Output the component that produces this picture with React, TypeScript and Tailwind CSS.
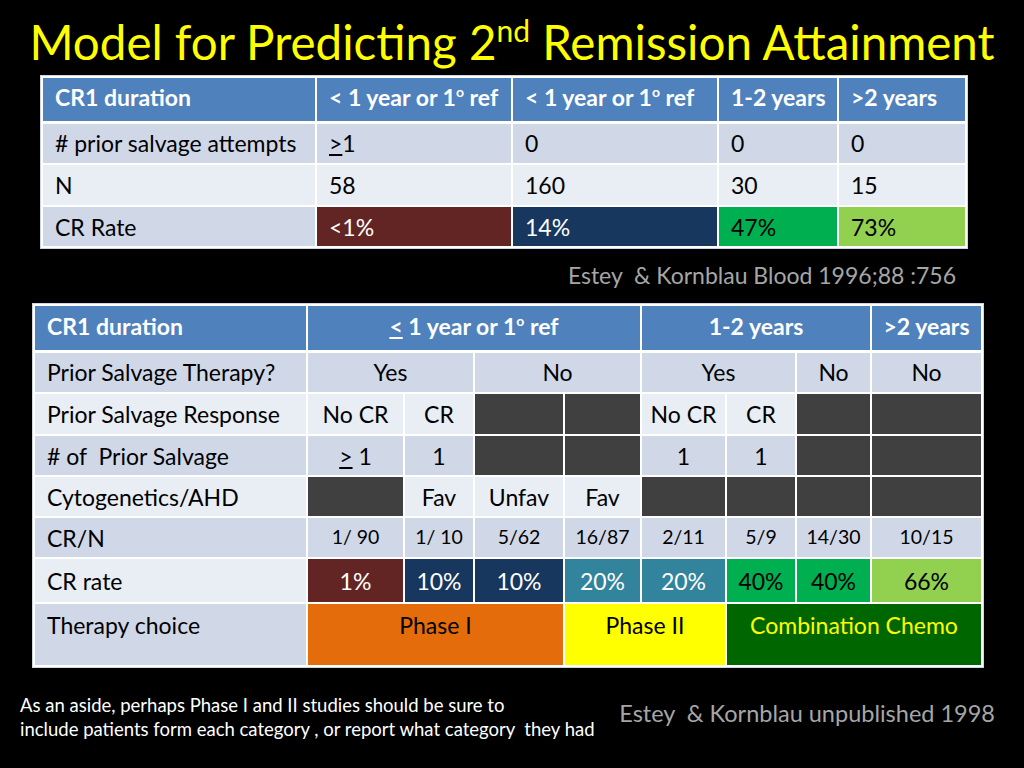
const font = { fontFamily: 'Lato, "Open Sans", sans-serif' }

const hd = 'bg-[#4f81bd] text-white font-bold border-2 border-white border-b-[3px]'
const odd = 'bg-[#d0d8e8]'
const even = 'bg-[#e9edf4]'
const dark = 'bg-[#404040]'
const cell = 'border-2 border-white p-0'

const Sup = () => <sup className="text-[14px] relative -top-[9px]">o</sup>

const TopTable = () => (
  <table className="table-fixed border-collapse text-[23px] leading-[28px] text-black ml-[41px] outline outline-1 outline-[#cfd6e3]">
    <colgroup>
      <col className="w-[274px]" />
      <col className="w-[196px]" />
      <col className="w-[206px]" />
      <col className="w-[120px]" />
      <col className="w-[128px]" />
    </colgroup>
    <tbody>
      <tr className="h-[45px]">
        <td className={`${hd} pl-3 pb-[4px]`}>CR1 duration</td>
        <td className={`${hd} pl-3 pb-[4px]`}>
          &lt; 1 year or 1<Sup /> ref
        </td>
        <td className={`${hd} pl-3 pb-[4px]`}>
          &lt; 1 year or 1<Sup /> ref
        </td>
        <td className={`${hd} pl-3 pb-[4px]`}>1-2 years</td>
        <td className={`${hd} pl-3 pb-[4px]`}>&gt;2 years</td>
      </tr>
      <tr className={`h-[42px] ${odd}`}>
        <td className={`${cell} pl-3`}># prior salvage attempts</td>
        <td className={`${cell} pl-3`}>
          <u>&gt;</u>1
        </td>
        <td className={`${cell} pl-3`}>0</td>
        <td className={`${cell} pl-3`}>0</td>
        <td className={`${cell} pl-3`}>0</td>
      </tr>
      <tr className={`h-[42px] ${even}`}>
        <td className={`${cell} pl-3`}>N</td>
        <td className={`${cell} pl-3`}>58</td>
        <td className={`${cell} pl-3`}>160</td>
        <td className={`${cell} pl-3`}>30</td>
        <td className={`${cell} pl-3`}>15</td>
      </tr>
      <tr className={`h-[41px] ${odd}`}>
        <td className={`${cell} pl-3`}>CR Rate</td>
        <td className={`${cell} pl-3 bg-[#632523] text-white`}>&lt;1%</td>
        <td className={`${cell} pl-3 bg-[#17375e] text-white`}>14%</td>
        <td className={`${cell} pl-3 bg-[#00b050]`}>47%</td>
        <td className={`${cell} pl-3 bg-[#92d050]`}>73%</td>
      </tr>
    </tbody>
  </table>
)

const BottomTable = () => (
  <table className="table-fixed border-collapse text-[23px] leading-[28px] text-black ml-[33px] text-center outline outline-1 outline-[#cfd6e3]">
    <colgroup>
      <col className="w-[273px]" />
      <col className="w-[97px]" />
      <col className="w-[70px]" />
      <col className="w-[90px]" />
      <col className="w-[77px]" />
      <col className="w-[85px]" />
      <col className="w-[70px]" />
      <col className="w-[75px]" />
      <col className="w-[111px]" />
    </colgroup>
    <tbody>
      <tr className="h-[46px]">
        <td className={`${hd} pl-3 pb-[3px] text-left`}>CR1 duration</td>
        <td colSpan={4} className={`${hd} pb-[3px]`}>
          <u>&lt;</u> 1 year or 1<Sup /> ref
        </td>
        <td colSpan={3} className={`${hd} pb-[3px]`}>1-2 years</td>
        <td className={`${hd} pb-[3px]`}>&gt;2 years</td>
      </tr>
      <tr className={`h-[42px] ${odd}`}>
        <td className={`${cell} pl-3 text-left`}>Prior Salvage Therapy?</td>
        <td colSpan={2} className={cell}>Yes</td>
        <td colSpan={2} className={cell}>No</td>
        <td colSpan={2} className={cell}>Yes</td>
        <td className={cell}>No</td>
        <td className={cell}>No</td>
      </tr>
      <tr className={`h-[42px] ${even}`}>
        <td className={`${cell} pl-3 text-left`}>Prior Salvage Response</td>
        <td className={cell}>No CR</td>
        <td className={cell}>CR</td>
        <td className={`${cell} ${dark}`} />
        <td className={`${cell} ${dark}`} />
        <td className={cell}>No CR</td>
        <td className={cell}>CR</td>
        <td className={`${cell} ${dark}`} />
        <td className={`${cell} ${dark}`} />
      </tr>
      <tr className={`h-[41px] ${odd}`}>
        <td className={`${cell} pl-3 text-left`}># of&nbsp; Prior Salvage</td>
        <td className={cell}>
          <u>&gt;</u> 1
        </td>
        <td className={cell}>1</td>
        <td className={`${cell} ${dark}`} />
        <td className={`${cell} ${dark}`} />
        <td className={cell}>1</td>
        <td className={cell}>1</td>
        <td className={`${cell} ${dark}`} />
        <td className={`${cell} ${dark}`} />
      </tr>
      <tr className={`h-[41px] ${even}`}>
        <td className={`${cell} pl-3 text-left`}>Cytogenetics/AHD</td>
        <td className={`${cell} ${dark}`} />
        <td className={cell}>Fav</td>
        <td className={cell}>Unfav</td>
        <td className={cell}>Fav</td>
        <td className={`${cell} ${dark}`} />
        <td className={`${cell} ${dark}`} />
        <td className={`${cell} ${dark}`} />
        <td className={`${cell} ${dark}`} />
      </tr>
      <tr className={`h-[41px] ${odd} text-[19.5px]`}>
        <td className={`${cell} pl-3 text-left text-[23px]`}>CR/N</td>
        <td className={`${cell} pb-[1px]`}>1/ 90</td>
        <td className={`${cell} pb-[1px]`}>1/ 10</td>
        <td className={`${cell} pb-[1px]`}>5/62</td>
        <td className={`${cell} pb-[1px]`}>16/87</td>
        <td className={`${cell} pb-[1px]`}>2/11</td>
        <td className={`${cell} pb-[1px]`}>5/9</td>
        <td className={`${cell} pb-[1px]`}>14/30</td>
        <td className={`${cell} pb-[1px]`}>10/15</td>
      </tr>
      <tr className={`h-[45px] ${even}`}>
        <td className={`${cell} pl-3 text-left`}>CR rate</td>
        <td className={`${cell} bg-[#632523] text-white`}>1%</td>
        <td className={`${cell} bg-[#17375e] text-white`}>10%</td>
        <td className={`${cell} bg-[#17375e] text-white`}>10%</td>
        <td className={`${cell} bg-[#31849b] text-white`}>20%</td>
        <td className={`${cell} bg-[#31849b] text-white`}>20%</td>
        <td className={`${cell} bg-[#00b050]`}>40%</td>
        <td className={`${cell} bg-[#00b050]`}>40%</td>
        <td className={`${cell} bg-[#92d050]`}>66%</td>
      </tr>
      <tr className={`h-[63px] ${odd} align-top`}>
        <td className={`${cell} pl-3 pt-[7px] text-left`}>Therapy choice</td>
        <td colSpan={3} className={`${cell} pt-[7px] bg-[#e46c0a]`}>Phase I</td>
        <td colSpan={2} className={`${cell} pt-[7px] bg-[#ffff00]`}>Phase II</td>
        <td colSpan={4} className={`${cell} pt-[7px] bg-[#006600] text-[#ffff00]`}>Combination Chemo</td>
      </tr>
    </tbody>
  </table>
)

export default function App() {
  return (
    <div className="w-[1024px] h-[768px] bg-black overflow-hidden" style={font}>
      <h1 className="h-[76px] pt-[12px] text-center text-[47.5px] leading-[60px] text-[#ffff00] whitespace-nowrap">
        Model for Predicting 2<sup className="text-[30px] relative -top-[18px]">nd</sup> Remission Attainment
      </h1>
      <TopTable />
      <div className="h-[56px] flex justify-end items-start pt-[13px] pr-[68px] text-[23px] leading-[28px] text-[#a6a6a6]">
        Estey&nbsp; &amp; Kornblau Blood 1996;88 :756
      </div>
      <BottomTable />
      <div className="flex justify-between items-start pt-[26px] pl-[20px] pr-[29px]">
        <p className="text-[18.5px] leading-[24px] text-white">
          As an aside, perhaps Phase I and II studies should be sure to
          <br />
          include patients form each category , or report what category&nbsp; they had
        </p>
        <p className="pt-[5px] text-[23.5px] leading-[30px] text-[#a6a6a6]">Estey&nbsp; &amp; Kornblau unpublished 1998</p>
      </div>
    </div>
  )
}
